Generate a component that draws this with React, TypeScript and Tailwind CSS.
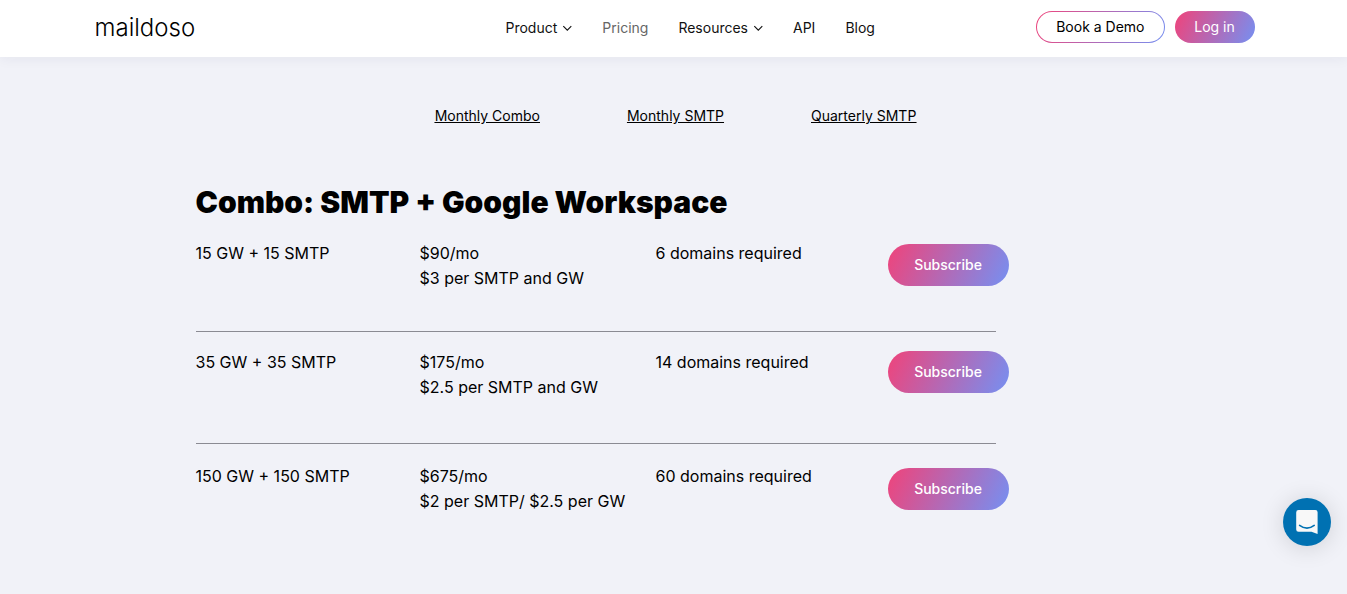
type Plan = {
  accounts: string;
  price: string;
  details: string;
  domains: string;
  rowClass: string;
  textClass: string;
  actionClass: string;
};

const navItems = [
  { label: "Product", hasMenu: true },
  { label: "Pricing", active: true },
  { label: "Resources", hasMenu: true },
  { label: "API" },
  { label: "Blog" },
];

const planLinks = [
  { label: "Monthly Combo", href: "#monthly-combo" },
  { label: "Monthly SMTP", href: "#monthly-smtp" },
  { label: "Quarterly SMTP", href: "#quarterly-smtp" },
];

const plans: Plan[] = [
  {
    accounts: "15 GW + 15 SMTP",
    price: "$90/mo",
    details: "$3 per SMTP and GW",
    domains: "6 domains required",
    rowClass: "h-[107px] border-b border-[#8b8b93]",
    textClass: "pt-[17px]",
    actionClass: "pt-5",
  },
  {
    accounts: "35 GW + 35 SMTP",
    price: "$175/mo",
    details: "$2.5 per SMTP and GW",
    domains: "14 domains required",
    rowClass: "h-[112px] border-b border-[#8b8b93]",
    textClass: "pt-[18px]",
    actionClass: "pt-[19px]",
  },
  {
    accounts: "150 GW + 150 SMTP",
    price: "$675/mo",
    details: "$2 per SMTP/ $2.5 per GW",
    domains: "60 domains required",
    rowClass: "h-[112px]",
    textClass: "pt-5",
    actionClass: "pt-6",
  },
];

function Chevron() {
  return (
    <svg width="10" height="10" viewBox="0 0 10 10" fill="none" stroke="currentColor">
      <path d="M1.3 3.2L5.3 7.2L9.3 3.2" strokeWidth="1.1" />
    </svg>
  );
}

function Header() {
  return (
    <header className="bg-white shadow-[0_2px_12px_rgba(40,40,80,0.06)]">
      <div className="mx-auto flex h-[57px] max-w-[1162px] items-center pb-0.5">
        <a
          href="#home"
          className="w-[413px] pl-0.5 text-2xl leading-8 font-light text-black"
        >
          maildoso
        </a>
        <nav className="flex items-center gap-[30px] text-sm text-[#111]">
          {navItems.map((item) =>
            item.hasMenu ? (
              <button key={item.label} type="button" className="flex items-center gap-[5px]">
                {item.label}
                <Chevron />
              </button>
            ) : (
              <a
                key={item.label}
                href={`#${item.label.toLowerCase()}`}
                className={item.active ? "text-[#666]" : ""}
              >
                {item.label}
              </a>
            )
          )}
        </nav>
        <div className="mb-0.5 ml-auto flex gap-[10px] text-sm">
          <a
            href="#demo"
            className="rounded-full bg-linear-[115deg,#f0437a,#7590f2] p-px text-black"
          >
            <span className="flex h-[30px] items-center rounded-full bg-white px-[19px]">
              Book a Demo
            </span>
          </a>
          <a
            href="#login"
            className="flex h-8 w-20 items-center justify-center rounded-full bg-linear-[115deg,#f0437a,#7590f2] text-white"
          >
            Log in
          </a>
        </div>
      </div>
    </header>
  );
}

function PlanTable() {
  return (
    <table className="w-[800px] table-fixed border-collapse text-left text-base leading-[25px]">
      <colgroup>
        <col className="w-[224px]" />
        <col className="w-[236px]" />
        <col className="w-[232px]" />
        <col />
      </colgroup>
      <tbody>
        {plans.map((plan) => (
          <tr key={plan.accounts} className={`align-top ${plan.rowClass}`}>
            <th scope="row" className={`font-normal ${plan.textClass}`}>
              {plan.accounts}
            </th>
            <td className={plan.textClass}>
              <p>{plan.price}</p>
              <p>{plan.details}</p>
            </td>
            <td className={plan.textClass}>{plan.domains}</td>
            <td className={plan.actionClass}>
              <button
                type="button"
                className="block h-[42px] w-[121px] rounded-full bg-linear-[115deg,#f0437a,#7590f2] text-sm font-medium text-white"
              >
                Subscribe
              </button>
            </td>
          </tr>
        ))}
      </tbody>
    </table>
  );
}

function ChatButton() {
  return (
    <button
      type="button"
      aria-label="Open chat"
      className="fixed right-4 bottom-12 flex size-12 items-center justify-center rounded-full bg-[#0071b2] shadow-[0_2px_24px_rgba(0,0,0,0.14)]"
    >
      <svg width="22" height="24" viewBox="0 0 22 24" fill="none">
        <path
          d="M2.6 0H19.4A2.2 2.2 0 0 1 21.6 2.2V24L15.5 21.8H2.6A2.4 2.4 0 0 1 .2 19.4V2.4A2.4 2.4 0 0 1 2.6 0Z"
          fill="#f8f8f8"
        />
        <path
          d="M3.6 15.4Q11 20.8 18.2 15.4"
          stroke="#0071b2"
          strokeWidth="1.6"
          strokeLinecap="round"
        />
      </svg>
    </button>
  );
}

export default function App() {
  return (
    <div className="min-h-screen bg-[#f1f2f8] font-[Inter,sans-serif] text-black">
      <Header />
      <main className="mx-auto max-w-[956px] pt-[47px] pb-4">
        <nav className="flex justify-center gap-[87px] pl-1 text-sm leading-6 underline">
          {planLinks.map((link) => (
            <a key={link.href} href={link.href}>
              {link.label}
            </a>
          ))}
        </nav>
        <section id="monthly-combo" className="mt-[54px]">
          <h1 className="mb-0.5 text-3xl leading-10 font-black">
            Combo: SMTP + Google Workspace
          </h1>
          <PlanTable />
        </section>
      </main>
      <ChatButton />
    </div>
  );
}
